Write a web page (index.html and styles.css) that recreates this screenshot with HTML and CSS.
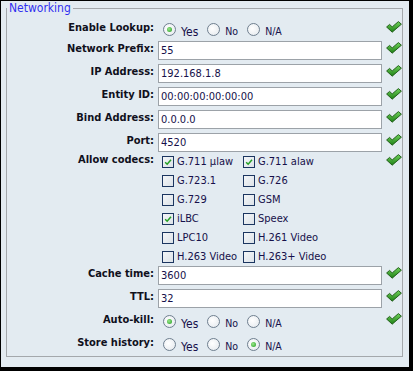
FILE: index.html
```html
<!DOCTYPE html>
<html lang="en">
<head>
	<meta charset="UTF-8">
	<title>Networking</title>
	<link rel="stylesheet" href="styles.css">
</head>
<body>
	<svg class="defs" width="0" height="0">
		<defs>
			<linearGradient id="okFill" x1="0" y1="0" x2="0" y2="1">
				<stop offset="0" stop-color="#6fd25a"/>
				<stop offset="1" stop-color="#1f7f16"/>
			</linearGradient>
		</defs>
	</svg>
	<div class="panel">
		<fieldset class="group">
			<legend>Networking</legend>
			<div class="form">
				<div class="row row-first">
					<span class="lbl">Enable Lookup:</span>
					<div class="radios">
						<span class="radio on"></span><span class="opt opt-yes">Yes</span>
						<span class="radio"></span><span class="opt">No</span>
						<span class="radio"></span><span class="opt">N/A</span>
					</div>
					<svg class="ok" viewBox="0 0 16 12"><path d="M0.6 6 L3.6 3.4 L6.2 5.9 L12.4 0.6 L15.4 3.2 L6.2 11.2 Z"/></svg>
				</div>
				<div class="row">
					<span class="lbl">Network Prefix:</span>
					<div class="field">55</div>
					<svg class="ok" viewBox="0 0 16 12"><path d="M0.6 6 L3.6 3.4 L6.2 5.9 L12.4 0.6 L15.4 3.2 L6.2 11.2 Z"/></svg>
				</div>
				<div class="row">
					<span class="lbl">IP Address:</span>
					<div class="field">192.168.1.8</div>
					<svg class="ok" viewBox="0 0 16 12"><path d="M0.6 6 L3.6 3.4 L6.2 5.9 L12.4 0.6 L15.4 3.2 L6.2 11.2 Z"/></svg>
				</div>
				<div class="row">
					<span class="lbl">Entity ID:</span>
					<div class="field">00:00:00:00:00:00</div>
					<svg class="ok" viewBox="0 0 16 12"><path d="M0.6 6 L3.6 3.4 L6.2 5.9 L12.4 0.6 L15.4 3.2 L6.2 11.2 Z"/></svg>
				</div>
				<div class="row">
					<span class="lbl">Bind Address:</span>
					<div class="field">0.0.0.0</div>
					<svg class="ok" viewBox="0 0 16 12"><path d="M0.6 6 L3.6 3.4 L6.2 5.9 L12.4 0.6 L15.4 3.2 L6.2 11.2 Z"/></svg>
				</div>
				<div class="row">
					<span class="lbl">Port:</span>
					<div class="field">4520</div>
					<svg class="ok" viewBox="0 0 16 12"><path d="M0.6 6 L3.6 3.4 L6.2 5.9 L12.4 0.6 L15.4 3.2 L6.2 11.2 Z"/></svg>
				</div>
				<div class="row">
					<span class="lbl lbl-codecs">Allow codecs:</span>
					<div class="codecs">
						<div class="codec"><span class="box on"><svg viewBox="0 0 12 12"><path d="M2.6 6.2 L5 8.6 L9.6 3.2"/></svg></span>G.711 µlaw</div>
						<div class="codec"><span class="box on"><svg viewBox="0 0 12 12"><path d="M2.6 6.2 L5 8.6 L9.6 3.2"/></svg></span>G.711 alaw</div>
						<div class="codec"><span class="box"></span>G.723.1</div>
						<div class="codec"><span class="box"></span>G.726</div>
						<div class="codec"><span class="box"></span>G.729</div>
						<div class="codec"><span class="box"></span>GSM</div>
						<div class="codec"><span class="box on"><svg viewBox="0 0 12 12"><path d="M2.6 6.2 L5 8.6 L9.6 3.2"/></svg></span>iLBC</div>
						<div class="codec"><span class="box"></span>Speex</div>
						<div class="codec"><span class="box"></span>LPC10</div>
						<div class="codec"><span class="box"></span>H.261 Video</div>
						<div class="codec"><span class="box"></span>H.263 Video</div>
						<div class="codec"><span class="box"></span>H.263+ Video</div>
					</div>
					<svg class="ok ok-codecs" viewBox="0 0 16 12"><path d="M0.6 6 L3.6 3.4 L6.2 5.9 L12.4 0.6 L15.4 3.2 L6.2 11.2 Z"/></svg>
				</div>
				<div class="row">
					<span class="lbl">Cache time:</span>
					<div class="field">3600</div>
					<svg class="ok" viewBox="0 0 16 12"><path d="M0.6 6 L3.6 3.4 L6.2 5.9 L12.4 0.6 L15.4 3.2 L6.2 11.2 Z"/></svg>
				</div>
				<div class="row">
					<span class="lbl">TTL:</span>
					<div class="field">32</div>
					<svg class="ok" viewBox="0 0 16 12"><path d="M0.6 6 L3.6 3.4 L6.2 5.9 L12.4 0.6 L15.4 3.2 L6.2 11.2 Z"/></svg>
				</div>
				<div class="row">
					<span class="lbl">Auto-kill:</span>
					<div class="radios">
						<span class="radio on"></span><span class="opt opt-yes">Yes</span>
						<span class="radio"></span><span class="opt">No</span>
						<span class="radio"></span><span class="opt">N/A</span>
					</div>
					<svg class="ok" viewBox="0 0 16 12"><path d="M0.6 6 L3.6 3.4 L6.2 5.9 L12.4 0.6 L15.4 3.2 L6.2 11.2 Z"/></svg>
				</div>
				<div class="row">
					<span class="lbl">Store history:</span>
					<div class="radios">
						<span class="radio"></span><span class="opt opt-yes">Yes</span>
						<span class="radio"></span><span class="opt">No</span>
						<span class="radio on"></span><span class="opt">N/A</span>
					</div>
				</div>
			</div>
		</fieldset>
	</div>
</body>
</html>
```

FILE: styles.css
```css
body {
	margin: 0;
	padding: 0;
	background: #000;
	font-family: "DejaVu Sans Condensed", "DejaVu Sans", sans-serif;
	font-stretch: condensed;
	font-size: 11px;
}
.defs {
	position: absolute;
}
.panel {
	width: 403px;
	height: 366px;
	margin: 1px 0 0 1px;
	padding: 0 0 0 5px;
	background: #e3ebf1;
}
.group {
	width: 395px;
	margin: 0;
	padding: 5px 0 2px 0;
	border: 1px solid #a4a8ac;
	min-width: 0;
}
.group legend {
	padding: 0 2px;
	font-size: 12px;
	line-height: 14px;
	color: #3030f0;
}
.form {
	display: flex;
	flex-direction: column;
	gap: 4px;
}
.row {
	display: grid;
	grid-template-columns: 147px 224px 16px;
	column-gap: 4px;
	min-height: 19px;
}
.row-first {
	margin-bottom: -2px;
}
.lbl {
	text-align: right;
	font-weight: bold;
	color: #10101c;
	line-height: 14px;
	padding-top: 1px;
}
.field {
	height: 17px;
	border: 1px solid #9ca2a8;
	background: #fff;
	padding-left: 2px;
	line-height: 17px;
	color: #16104a;
}
.ok {
	width: 16px;
	height: 12px;
	margin-top: 1px;
}
.ok path {
	fill: url(#okFill);
	stroke: #1a5612;
	stroke-width: 0.9;
	stroke-linejoin: round;
}
.radios {
	display: flex;
	align-items: center;
	padding-left: 5px;
}
.radio {
	box-sizing: border-box;
	width: 13px;
	height: 13px;
	border-radius: 50%;
	border: 1px solid #6f7f8f;
	background: radial-gradient(circle at 40% 40%, #ffffff, #e2e7ec);
	display: flex;
	align-items: center;
	justify-content: center;
	flex-shrink: 0;
}
.radio.on::after {
	content: "";
	width: 5px;
	height: 5px;
	border-radius: 50%;
	background: radial-gradient(circle at 40% 40%, #9be88b, #1e9a1e);
}
.opt {
	margin-left: 5px;
	margin-right: 9px;
	color: #16104a;
	font-size: 10.5px;
	padding-top: 2px;
}
.opt-yes {
	font-size: 12px;
	font-stretch: normal;
	padding-top: 4px;
}
.codecs {
	display: grid;
	grid-template-columns: 81px 143px;
	grid-auto-rows: 19px;
	margin-top: -4px;
	margin-bottom: -4px;
}
.codec {
	display: flex;
	align-items: center;
	gap: 3px;
	padding-left: 4px;
	color: #16104a;
	white-space: nowrap;
}
.box {
	box-sizing: border-box;
	width: 12px;
	height: 12px;
	border: 1px solid #1b3560;
	background: linear-gradient(135deg, #f4f6f8, #dce2e8);
	flex-shrink: 0;
	display: flex;
}
.box svg {
	width: 10px;
	height: 10px;
}
.box path {
	fill: none;
	stroke: #24a024;
	stroke-width: 1.8;
}
.lbl-codecs {
	padding-top: 0;
	margin-top: -3px;
}
.ok-codecs {
	margin-top: -2px;
}
```
